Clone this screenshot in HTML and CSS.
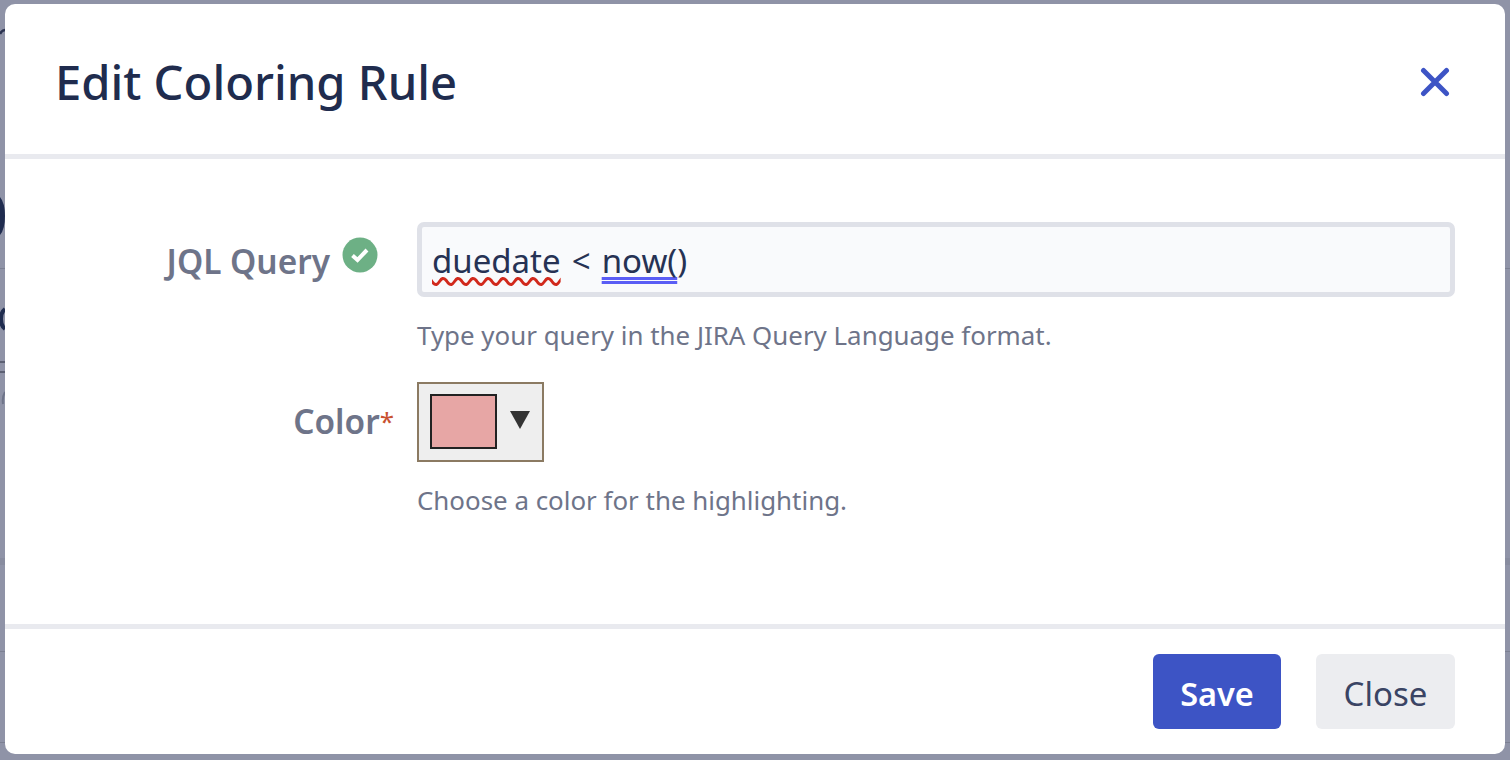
FILE: index.html
```html
<!DOCTYPE html>
<html lang="en">
<head>
  <meta charset="UTF-8">
  <meta name="viewport" content="width=device-width, initial-scale=1.0">
  <title>Edit Coloring Rule</title>
  <link rel="stylesheet" href="styles.css">
</head>
<body>
  <!-- bits of the page behind the dialog -->
  <div class="backdrop">
    <span class="back-line line-1"></span>
    <span class="back-band"></span>
    <span class="back-line line-3"></span>
    <span class="back-line line-4"></span>
    <svg class="back-marks" width="5" height="760" viewBox="0 0 5 760">
      <path d="M0 34 Q2 30 5 30" fill="none" stroke="#2b3350" stroke-width="2.5"/>
      <path d="M0 197 Q5 203 5 216 Q5 229 0 235 Z" fill="#1f2c4f"/>
      <path d="M5 309 Q1 312 1 319 Q1 326 5 329" fill="none" stroke="#1f2c4f" stroke-width="4"/>
      <path d="M0 362 H5 M0 372 H5" stroke="#5c6073" stroke-width="2"/>
      <path d="M5 392 Q2 397 3 404" fill="none" stroke="#6e7489" stroke-width="2"/>
    </svg>
  </div>

  <div class="modal">
    <header class="modal-header">
      <h1>Edit Coloring Rule</h1>
      <button class="close-icon" aria-label="Close">
        <svg width="30" height="30" viewBox="0 0 30 30">
          <path d="M3.5 3.5 L26.5 26.5 M26.5 3.5 L3.5 26.5" fill="none" stroke="#3d54c5" stroke-width="5" stroke-linecap="round"/>
        </svg>
      </button>
    </header>

    <section class="modal-body">
      <div class="form-row">
        <label class="form-label">
          JQL Query
          <svg class="valid-icon" width="36" height="36" viewBox="0 0 36 36">
            <circle cx="18" cy="18" r="17.5" fill="#6db085"/>
            <path d="M10.5 18.5 L15.5 23 L25 13" fill="none" stroke="#fff" stroke-width="4"/>
          </svg>
        </label>
        <div class="form-field">
          <div class="query-input"><span class="err">duedate</span> &lt; <span class="fn">now(</span>)</div>
          <p class="help">Type your query in the JIRA Query Language format.</p>
        </div>
      </div>

      <div class="form-row color-row">
        <label class="form-label">Color<span class="req">*</span></label>
        <div class="form-field">
          <button class="color-button">
            <span class="swatch"></span>
            <span class="arrow"></span>
          </button>
          <p class="help">Choose a color for the highlighting.</p>
        </div>
      </div>
    </section>

    <footer class="modal-footer">
      <button class="btn btn-save">Save</button>
      <button class="btn btn-close">Close</button>
    </footer>
  </div>
</body>
</html>
```

FILE: styles.css
```css
/* General Styles */
html, body {
  height: 100%;
}

body {
  margin: 0;
  height: 760px;
  overflow: hidden;
  box-sizing: border-box;
  padding: 4px 5px 6px;
  font-family: "Noto Sans", sans-serif;
  background-color: #8f93a7;
  position: relative;
}

/* Behind the dialog */
.backdrop {
  position: absolute;
  top: 0;
  left: 0;
  right: 0;
  bottom: 0;
}

.back-line {
  position: absolute;
  left: 0;
  right: 0;
  height: 1px;
  background-color: #7c8092;
}

.line-1 { top: 268px; }
.line-3 { top: 651px; }
.line-4 { top: 742px; }

.back-band {
  position: absolute;
  left: 0;
  right: 0;
  top: 558px;
  height: 7px;
  background-color: #888c9f;
}

.back-marks {
  position: absolute;
  left: 0;
  top: 0;
}

/* Dialog */
.modal {
  position: relative;
  display: flex;
  flex-direction: column;
  height: 750px;
  background-color: #fff;
  border-radius: 10px;
}

.modal-header {
  display: flex;
  justify-content: space-between;
  align-items: center;
  box-sizing: border-box;
  height: 155px;
  padding: 5px 50px 0 50px;
  border-bottom: 5px solid #e9eaef;
}

.modal-header h1 {
  margin: 0;
  font-size: 47.2px;
  font-weight: 500;
  color: #202c4e;
}

.close-icon {
  display: block;
  padding: 0;
  margin-right: 5px;
  width: 30px;
  height: 30px;
  border: none;
  background: none;
}

/* Form */
.modal-body {
  flex: 1;
  padding: 63px 50px 0 0;
}

.form-row {
  display: flex;
}

.color-row {
  margin-top: 29px;
}

.form-label {
  position: relative;
  width: 325px;
  padding-right: 87px;
  box-sizing: content-box;
  text-align: right;
  font-size: 33.4px;
  font-weight: 600;
  line-height: 78px;
  color: #6e7489;
}

.color-row .form-label {
  padding-right: 23px;
  width: 389px;
}

.valid-icon {
  position: absolute;
  right: 39px;
  top: 15px;
}

.req {
  color: #c8512f;
  font-size: 26px;
  font-weight: 400;
  vertical-align: 3px;
}

.form-field {
  flex: 1;
}

.query-input {
  height: 75px;
  box-sizing: border-box;
  padding-left: 10px;
  border: 5px solid #dfe1e8;
  border-radius: 7px;
  background-color: #f9fafc;
  font-size: 33px;
  line-height: 67px;
  color: #263254;
  word-spacing: 2.5px;
}

.err {
  text-decoration: underline wavy #d1291c 3px;
  text-underline-offset: 4px;
  text-decoration-skip-ink: none;
}

.fn {
  text-decoration: underline double #5a5df5 3px;
  text-underline-offset: 4px;
  text-decoration-skip-ink: none;
}

.help {
  margin: 20px 0 0;
  font-size: 25.9px;
  line-height: 36px;
  color: #6e7489;
}

.color-button {
  display: flex;
  align-items: flex-start;
  width: 127px;
  height: 80px;
  padding: 10px 0 0 11px;
  box-sizing: border-box;
  border: 2px solid #8b7a62;
  background-color: #eee;
}

.swatch {
  display: block;
  width: 67px;
  height: 55px;
  box-sizing: border-box;
  border: 2px solid #222;
  background-color: #e7a6a5;
}

.arrow {
  width: 0;
  height: 0;
  margin: 17px 0 0 13px;
  border-left: 10px solid transparent;
  border-right: 10px solid transparent;
  border-top: 18px solid #333;
}

/* Footer */
.modal-footer {
  display: flex;
  justify-content: flex-end;
  gap: 35px;
  height: 130px;
  box-sizing: border-box;
  padding: 25px 50px 0 0;
  border-top: 5px solid #e9eaef;
}

.btn {
  height: 75px;
  padding: 3px 0 0;
  border: none;
  border-radius: 6px;
  font-family: inherit;
  font-size: 32.5px;
}

.btn-save {
  width: 128px;
  background-color: #3d54c5;
  color: #fff;
  font-weight: 600;
}

.btn-close {
  width: 139px;
  background-color: #ecedf0;
  color: #3a4464;
  font-size: 33px;
}
```
